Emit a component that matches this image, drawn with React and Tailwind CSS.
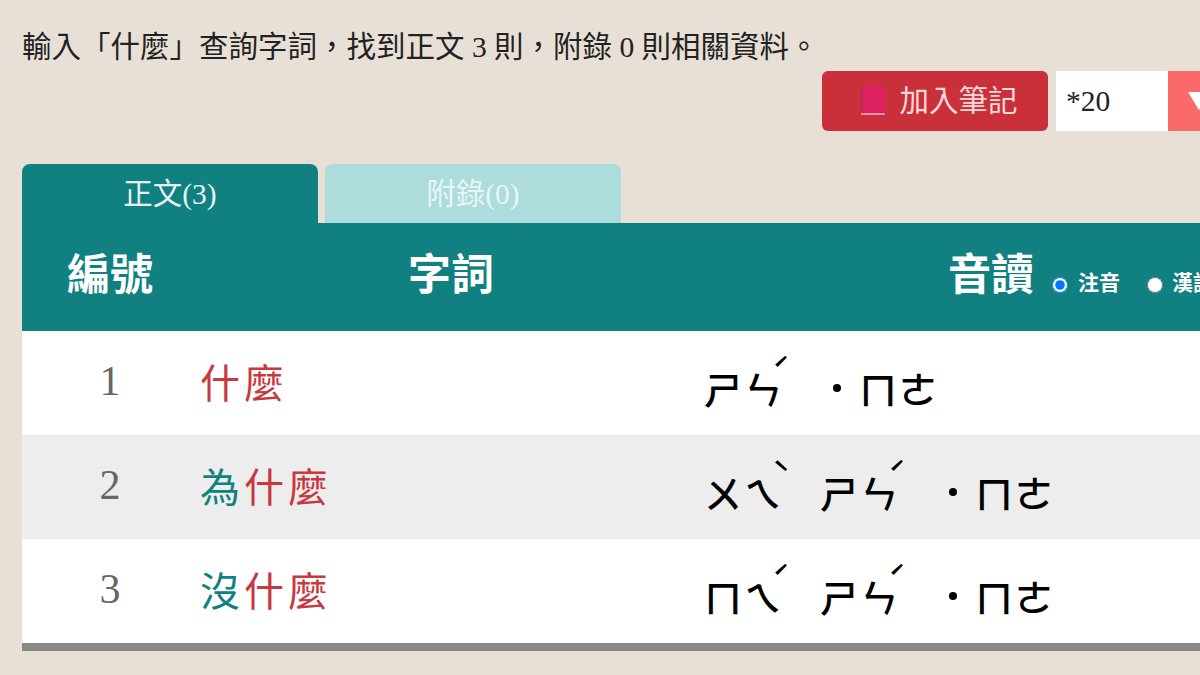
import React from 'react';

const rows = [
    { id: 1, word: [['', '什麼']], reading: [['ㄕ', 'ㄣ', 'ˊ'], ['˙', 'ㄇ', 'ㄜ']] },
    { id: 2, word: [['為', '什麼']], reading: [['ㄨ', 'ㄟ', 'ˋ'], ['ㄕ', 'ㄣ', 'ˊ'], ['˙', 'ㄇ', 'ㄜ']] },
    { id: 3, word: [['沒', '什麼']], reading: [['ㄇ', 'ㄟ', 'ˊ'], ['ㄕ', 'ㄣ', 'ˊ'], ['˙', 'ㄇ', 'ㄜ']] },
];

const sans = "font-['Noto_Sans_CJK_TC',sans-serif]";

const BookIcon = () => (
    <svg width="26" height="31" viewBox="0 0 26 31" className="shrink-0 -mt-[2px]">
        <rect x="1" y="1" width="24" height="26" fill="#dd2160" />
        <rect x="1" y="1" width="2" height="26" fill="#b82a62" />
        <rect x="1" y="28" width="24" height="2" fill="#e58ab0" />
    </svg>
);

const Syllable = ({ parts }) => {
    const neutral = parts[0] === '˙';
    return (
        <div className="w-[116px] flex items-center h-[50px] shrink-0 mt-[9px]">
            {neutral ? (
                <>
                    <span className="w-[39px] pl-[13px] flex"><span className="w-[8px] h-[8px] rounded-full bg-black" /></span>
                    <span className="w-[40px]">{parts[1]}</span>
                    <span className="w-[37px]">{parts[2]}</span>
                </>
            ) : (
                <>
                    <span className="w-[40px]">{parts[0]}</span>
                    <span className="w-[28px]">{parts[1]}</span>
                    <span className="w-[24px] -mt-[38px] text-[30px]">{parts[2]}</span>
                </>
            )}
        </div>
    );
};

export default function App() {
    return (
        <div className="w-[1200px] h-[675px] overflow-hidden bg-[#e8e0d6] font-['Liberation_Serif','Noto_Sans_CJK_TC',serif] pl-[22px]">
            <p className="pt-[27px] h-[71px] text-[29.5px] leading-[40px] text-[#222] whitespace-nowrap">
                輸入「什麼」查詢字詞，找到正文 3 則，附錄 0 則相關資料。
            </p>
            <div className="flex h-[60px] pl-[800px] w-[1300px]">
                <button className={`w-[226px] bg-[#c9303a] rounded-md flex items-center justify-center gap-[13px] pl-[8px] text-[29.5px] text-[#fcd9d9] ${sans} font-normal`}>
                    <BookIcon />
                    <span className="-mt-[6px]">加入筆記</span>
                </button>
                <div className="ml-2 w-[112px] bg-white flex items-center pl-[10px] text-[29.5px] text-[#222]">*20</div>
                <div className="w-[60px] bg-[#fb6a6a] flex items-center pl-[20px]">
                    <span className="w-0 h-0 border-x-[11px] border-x-transparent border-t-[18px] border-t-white" />
                </div>
            </div>
            <div className="mt-[33px] flex gap-[7px] h-[59px] text-[29.5px]">
                <div className="w-[296px] bg-[#108080] text-[#e6f2f2] rounded-t-lg flex justify-center pt-[10px] leading-[40px]">正文(3)</div>
                <div className="w-[296px] bg-[#acdcdc] text-[#e8f6f6] rounded-t-lg flex justify-center pt-[10px] leading-[40px]">附錄(0)</div>
            </div>
            <div className={`h-[108px] w-[1300px] bg-[#108080] text-white grid grid-cols-[176px_506px_1fr] items-center font-bold text-[43px] ${sans}`}>
                <div className="text-center -mt-[12px]">編號</div>
                <div className="text-center -mt-[12px]">字詞</div>
                <div className="flex items-center pl-[244px] -mt-[12px]">
                    <span>音讀</span>
                    <label className="flex items-center text-[21px] ml-[18px] mt-[22px]">
                        <input type="radio" name="phonetic" defaultChecked className="w-4 h-4 mr-[10px] mt-[6px]" />
                        注音
                    </label>
                    <label className="flex items-center text-[21px] ml-[27px] mt-[22px]">
                        <input type="radio" name="phonetic" className="w-4 h-4 mr-[9px] mt-[6px]" />
                        漢語拼音
                    </label>
                </div>
            </div>
            <div className="w-[1300px] border-b-[8px] border-b-[#8a8985]">
                {rows.map(row => (
                    <div key={row.id} className="h-[104px] grid grid-cols-[176px_506px_1fr] items-center odd:bg-white even:bg-[#eeeded]">
                        <div className="text-center text-[42px] text-[#666] -mt-[4px]">{row.id}</div>
                        <div className="pl-[2px] text-[40px] tracking-[4px] mt-[4px] whitespace-nowrap">
                            <span className="text-[#108080]">{row.word[0][0]}</span>
                            <span className="text-[#c8383f]">{row.word[0][1]}</span>
                        </div>
                        <div className={`flex text-[38px] font-medium text-black ${sans}`}>
                            {row.reading.map((parts, i) => <Syllable key={i} parts={parts} />)}
                        </div>
                    </div>
                ))}
            </div>
        </div>
    );
}
